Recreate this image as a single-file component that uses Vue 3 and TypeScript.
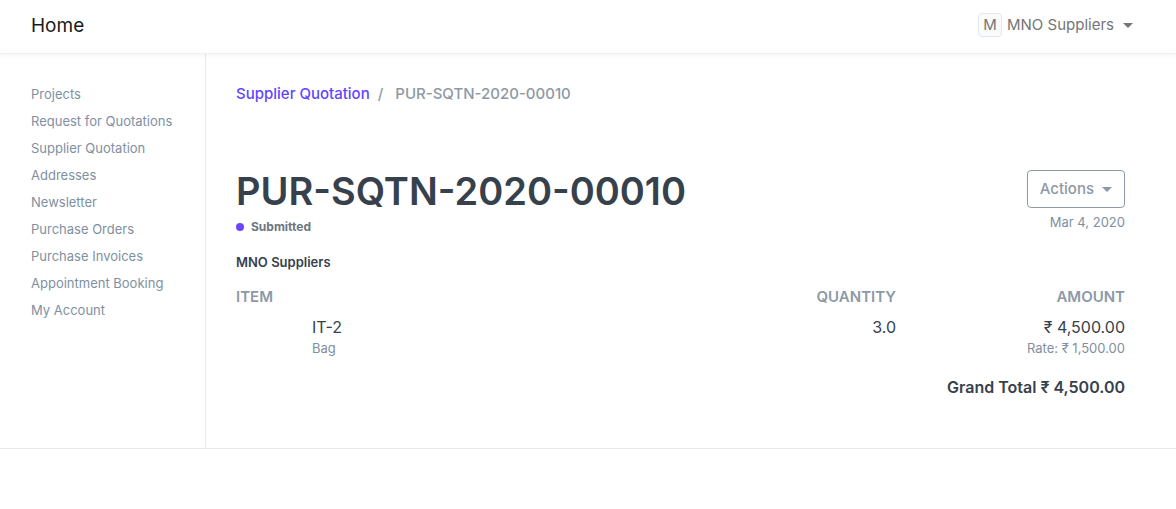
<script setup lang="ts">
interface QuotationItem {
  name: string
  description: string
  quantity: string
  amount: string
  rate: string
}

const supplier = 'MNO Suppliers'
const quotation = 'PUR-SQTN-2020-00010'

const sidebarLinks: string[] = [
  'Projects',
  'Request for Quotations',
  'Supplier Quotation',
  'Addresses',
  'Newsletter',
  'Purchase Orders',
  'Purchase Invoices',
  'Appointment Booking',
  'My Account',
]

const items: QuotationItem[] = [
  { name: 'IT-2', description: 'Bag', quantity: '3.0', amount: '₹ 4,500.00', rate: 'Rate: ₹ 1,500.00' },
]
</script>

<template>
  <div class="page">
    <header class="navbar">
      <a class="brand" href="#">Home</a>
      <button class="account" type="button">
        <span class="avatar">{{ supplier.charAt(0) }}</span>
        <span>{{ supplier }}</span>
        <span class="caret"></span>
      </button>
    </header>

    <div class="body">
      <nav class="sidebar" aria-label="Account pages">
        <a v-for="link in sidebarLinks" :key="link" href="#">{{ link }}</a>
      </nav>

      <main class="content">
        <nav class="breadcrumb" aria-label="Breadcrumb">
          <a href="#">Supplier Quotation</a>
          <span class="slash">/</span>
          <span>{{ quotation }}</span>
        </nav>

        <div class="heading">
          <div>
            <h1>{{ quotation }}</h1>
            <p class="status"><span class="dot"></span>Submitted</p>
          </div>
          <div class="heading-side">
            <button class="actions" type="button">
              Actions
              <span class="caret"></span>
            </button>
            <time datetime="2020-03-04">Mar 4, 2020</time>
          </div>
        </div>

        <p class="party">{{ supplier }}</p>

        <table class="items">
          <thead>
            <tr>
              <th class="item-col" scope="col">ITEM</th>
              <th class="qty-col" scope="col">QUANTITY</th>
              <th class="amount-col" scope="col">AMOUNT</th>
            </tr>
          </thead>
          <tbody>
            <tr v-for="item in items" :key="item.name">
              <td class="item-cell">
                {{ item.name }}
                <small>{{ item.description }}</small>
              </td>
              <td>{{ item.quantity }}</td>
              <td>
                {{ item.amount }}
                <small>{{ item.rate }}</small>
              </td>
            </tr>
          </tbody>
          <tfoot>
            <tr>
              <td class="total" colspan="3"><span>Grand Total</span><span>₹ 4,500.00</span></td>
            </tr>
          </tfoot>
        </table>
      </main>
    </div>
  </div>
</template>

<style>
body {
  margin: 0;
  background: #fff;
}
</style>

<style scoped>
.page {
  font-family: Inter, 'Noto Sans', sans-serif;
  font-size: 16px;
  line-height: 24px;
  color: #36414c;
}

a {
  text-decoration: none;
}

button {
  font: inherit;
  cursor: pointer;
}

p,
h1 {
  margin: 0;
}

.navbar {
  position: relative;
  display: flex;
  align-items: center;
  justify-content: space-between;
  padding: 9px 43px 12px 31px;
  border-bottom: 1px solid #f0f0f0;
  box-shadow: 0 2px 4px rgba(0, 0, 0, 0.04);
}

.brand {
  padding-top: 1px;
  font-size: 19px;
  line-height: 31px;
  color: #1a1a1a;
}

.account {
  display: flex;
  align-items: center;
  gap: 5px;
  padding: 0;
  border: 0;
  background: none;
  font-size: 15px;
  line-height: 24px;
  color: #757575;
}

.avatar {
  width: 22px;
  line-height: 22px;
  text-align: center;
  border: 1px solid #e4e8ec;
  border-radius: 4px;
  background: #fafbfc;
}

.caret {
  border-top: 5px solid currentColor;
  border-right: 5px solid transparent;
  border-left: 5px solid transparent;
}

.account .caret {
  margin-left: 4px;
}

.body {
  display: flex;
  border-bottom: 1px solid #e8e8ee;
}

.sidebar {
  flex: 0 0 174px;
  display: flex;
  flex-direction: column;
  padding: 27px 0 24px 31px;
  border-right: 1px solid #ebebeb;
}

.sidebar a {
  font-size: 13px;
  line-height: 27px;
  color: #8090a2;
}

.content {
  flex: 1;
  min-width: 0;
  padding: 28px 51px 46px 30px;
}

.breadcrumb {
  display: flex;
  font-size: 15px;
  font-weight: 500;
  color: #8d99a6;
}

.breadcrumb a {
  color: #6146ff;
}

.slash {
  padding: 0 12px 0 8px;
}

.heading {
  display: flex;
  justify-content: space-between;
  margin-top: 61px;
}

h1 {
  font-size: 38px;
  font-weight: 600;
  line-height: 48px;
}

.status {
  display: flex;
  align-items: center;
  gap: 7px;
  font-size: 12px;
  font-weight: 700;
  color: #6c7680;
}

.dot {
  width: 8px;
  height: 8px;
  border-radius: 50%;
  background: #6b46ff;
}

.heading-side {
  display: flex;
  flex-direction: column;
  align-items: flex-end;
  padding-top: 3px;
}

.actions {
  display: flex;
  align-items: center;
  gap: 8px;
  padding: 6px 12px;
  border: 1px solid #8d99a6;
  border-radius: 4px;
  background: #fff;
  font-size: 15px;
  font-weight: 500;
  line-height: 24px;
  color: #8d99a6;
}

time {
  margin-top: 4px;
  font-size: 13px;
  line-height: 20px;
  color: #8090a2;
}

.party {
  margin-top: 11px;
  font-size: 13px;
  font-weight: 600;
}

.items {
  width: 100%;
  margin-top: 8px;
  border-collapse: collapse;
}

th,
td {
  padding: 3px 0;
  text-align: right;
  vertical-align: top;
}

th {
  font-size: 15px;
  font-weight: 600;
  color: #8d99a6;
}

.item-col {
  text-align: left;
}

.qty-col {
  width: 26%;
}

.amount-col {
  width: 229px;
}

.item-cell {
  padding-left: 76px;
  text-align: left;
}

small {
  display: block;
  font-size: 13px;
  line-height: 18px;
  color: #8090a2;
}

.total {
  padding-top: 15px;
  font-weight: 600;
}

.total span + span {
  margin-left: 4px;
}
</style>
